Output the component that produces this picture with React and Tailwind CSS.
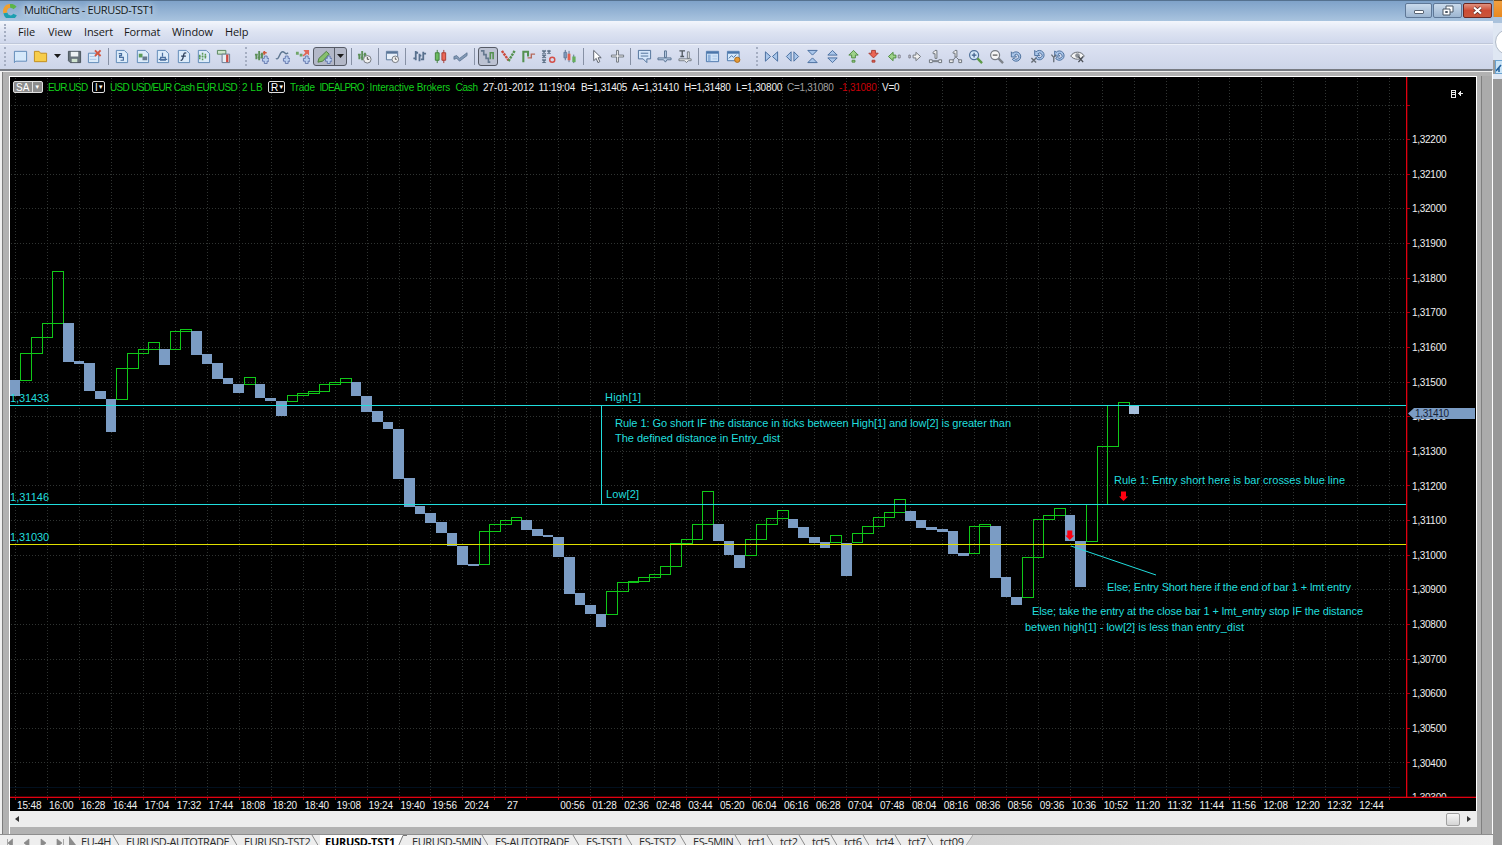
import React from "react";

const UP = "#10c818";
const DOWN = "#7b9cc4";
const CYAN = "#20dede";

// Each bar: [direction, top, bottom]; bars are laid out left to right at a fixed pitch.
const BARS = [
  ["d", 380, 396], ["u", 353, 380], ["u", 337, 353], ["u", 323, 337], ["u", 271, 323],
  ["d", 323, 362], ["d", 361, 364], ["d", 363, 391], ["d", 391, 399], ["d", 399, 432],
  ["u", 368, 399], ["u", 353, 368], ["u", 349, 353], ["u", 342, 349], ["d", 349, 365],
  ["u", 331, 349], ["u", 329, 331], ["d", 331, 355], ["d", 354, 364], ["d", 363, 379],
  ["d", 378, 384], ["d", 384, 393], ["u", 377, 384], ["d", 384, 398], ["d", 398, 401],
  ["d", 401, 416], ["u", 395, 401], ["u", 393, 395], ["u", 391, 393], ["u", 384, 391],
  ["u", 382, 384], ["u", 378, 382], ["d", 382, 396], ["d", 396, 412], ["d", 411, 422],
  ["d", 422, 429], ["d", 429, 479], ["d", 478, 507], ["d", 506, 514], ["d", 513, 523],
  ["d", 522, 533], ["d", 533, 546], ["d", 546, 565], ["d", 564, 566], ["u", 531, 564],
  ["u", 524, 531], ["u", 520, 524], ["u", 517, 520], ["d", 520, 530], ["d", 529, 536],
  ["d", 535, 537], ["d", 537, 557], ["d", 557, 594], ["d", 593, 605], ["d", 605, 614],
  ["d", 614, 627], ["u", 591, 614], ["u", 582, 591], ["u", 581, 582], ["u", 577, 581],
  ["u", 574, 577], ["u", 566, 574], ["u", 543, 566], ["u", 539, 543], ["u", 524, 539],
  ["u", 491, 524], ["d", 524, 541], ["d", 541, 555], ["d", 555, 568], ["u", 539, 555],
  ["u", 524, 539], ["u", 518, 524], ["u", 510, 518], ["d", 519, 528], ["d", 527, 538],
  ["d", 537, 543], ["d", 542, 548], ["u", 535, 542], ["d", 543, 576], ["u", 533, 542],
  ["u", 526, 533], ["u", 517, 526], ["u", 512, 517], ["u", 499, 512], ["d", 511, 521],
  ["d", 520, 528], ["d", 527, 530], ["d", 529, 532], ["d", 531, 554], ["d", 553, 556],
  ["u", 526, 553], ["u", 524, 526], ["d", 526, 578], ["d", 577, 597], ["d", 597, 605],
  ["u", 557, 597], ["u", 519, 557], ["u", 515, 519], ["u", 508, 515], ["d", 515, 541],
  ["d", 541, 587], ["u", 504, 541], ["u", 446, 504], ["u", 405, 446], ["u", 402, 405],
  ["d", 405, 413.5],
];

const TIMES = [
  "15:48", "16:00", "16:28", "16:44", "17:04", "17:32", "17:44", "18:08", "18:20", "18:40", "19:08",
  "19:24", "19:40", "19:56", "20:24", null, null, "00:56", "01:28", "02:36", "02:48", "03:44", "05:20",
  "06:04", "06:16", "06:28", "07:04", "07:48", "08:04", "08:16", "08:36", "08:56", "09:36", "10:36",
  "10:52", "11:20", "11:32", "11:44", "11:56", "12:08", "12:20", "12:32", "12:44", null,
];

const NOTES = [
  ["High[1]", 605, 401, 36],
  ["Low[2]", 606, 498, 33],
  ["Rule 1: Go short IF the distance in ticks between High[1] and low[2] is greater than", 615, 427, 396],
  ["The defined distance in Entry_dist", 615, 442, 165],
  ["Rule 1: Entry short here is bar crosses blue line", 1114, 484, 231],
  ["Else; Entry Short here if the end of bar 1 + lmt entry", 1107, 591, 244],
  ["Else; take the entry at the close bar 1 + lmt_entry stop IF the distance", 1032, 615, 331],
  ["betwen high[1] - low[2] is less than entry_dist", 1025, 631, 219],
  ["1,31433", 10, 402, 39],
  ["1,31146", 10, 501, 39],
  ["1,31030", 10, 541, 39],
];

function Arrow({ x, y }) {
  return <path d={`M${x - 2.5} ${y}h5v5h2l-4.5 4.5l-4.5-4.5h2z`} fill="#ff0010" />;
}

function Chart() {
  const gx = (i) => Math.round(15 + i * 31.96) + 0.5;
  const prices = Array.from({ length: 20 }, (_, i) => i);
  return (
    <svg className="block h-[734px] w-[1466px] bg-black" viewBox="10 77 1466 734" fontFamily="'Liberation Sans', Arial, sans-serif">
      <g stroke="#303432" strokeDasharray="1 2" shapeRendering="crispEdges">
        {TIMES.map((_, i) => <path key={i} d={`M${gx(i)} 78V796`} />)}
        <path d="M505.5 78V796" />
        {Array.from({ length: 20 }, (_, i) => {
          const y = Math.round(104.5 + i * 34.63) + 0.5;
          return <path key={i} d={`M11 ${y}H1410`} />;
        })}
      </g>
      <path d="M10 787.5H1400" stroke="#02101f" />
      <g shapeRendering="crispEdges">
        {BARS.map(([dir, top, bottom], i) => {
          const x = Math.round(9.7 + i * 10.657);
          const w = Math.round(9.7 + (i + 1) * 10.657) - x;
          return dir === "d" ? (
            <rect key={i} x={x} y={top} width={w} height={bottom - top} fill={i === BARS.length - 1 ? "#a6bfdc" : DOWN} />
          ) : (
            <rect key={i} x={x + 0.5} y={top + 0.5} width={w} height={bottom - top} fill="none" stroke={UP} />
          );
        })}
        <rect x="10" y="405" width="1396" height="1" fill={CYAN} />
        <rect x="10" y="504" width="1396" height="1" fill={CYAN} />
        <rect x="601" y="405" width="1" height="99" fill={CYAN} />
        <rect x="10" y="544" width="1396" height="1" fill="#e0e000" />
      </g>
      <path d="M1071 546L1156 575" stroke={CYAN} />
      <Arrow x={1123.5} y={491.5} />
      <Arrow x={1069.8} y={530.5} />
      {NOTES.map(([t, x, y, w]) => (
        <text key={t} x={x} y={y} textLength={w} fontSize="11" fill={CYAN}>{t}</text>
      ))}
      <g fontSize="10" fill="#f0f0f0">
        {prices.map((i) => {
          const y = 139.5 + i * 34.63;
          return (
            <text key={i} x="1412" y={y + 3.7} textLength="34.5">
              {"1,3" + String(2200 - i * 100).padStart(4, "0")}
            </text>
          );
        })}
      </g>
      <rect x="1408" y="798" width="68" height="13" fill="#000" />
      <g fontSize="10" fill="#f0f0f0">
        {TIMES.map((t, i) => t && <text key={i} x={17 + i * 31.96} y="808.5" textLength="24.5">{t}</text>)}
        <text x="507" y="808.5">27</text>
      </g>
      <g stroke="#a00010" shapeRendering="crispEdges">
        {TIMES.map((_, i) => <path key={i} d={`M${gx(i)} 797v3`} />)}
        <path d="M505.5 797v3" />
        {Array.from({ length: 20 }, (_, i) => (
          <path key={i} d={`M1407 ${Math.round(104.5 + i * 34.63) + 0.5}h3`} />
        ))}
      </g>
      <rect x="1406" y="77" width="1.3" height="720" fill="#e00010" />
      <rect x="10" y="796.7" width="1466" height="1.3" fill="#e00010" />
      <path d="M1408 413.5L1414 408H1475V419H1414Z" fill={DOWN} />
      <text x="1415" y="417.3" fontSize="10" textLength="34" fill="#142036">1,31410</text>
      <g stroke="#e8e8e8" fill="none" shapeRendering="crispEdges">
        <path d="M1451.5 90.5h4v7h-4zM1451 92.5h4M1451 94.5h4M1458 93.5h5M1459.5 92v3M1460.5 91v5" />
      </g>
    </svg>
  );
}

const G = "text-[#12cf1c]";
const W = "text-[#f0f0f0]";
const LEGEND = [
  ["USD USD/EUR Cash EUR.USD", "w-[132px] tracking-[-0.66px]", G],
  ["2 LB", "w-[26px]", G],
  "R",
  ["Trade", "w-[29.5px] tracking-[-0.2px]", G],
  ["IDEALPRO", "w-[50px] tracking-[-0.8px]", G],
  ["Interactive Brokers", "w-[86px] tracking-[-0.14px]", G],
  ["Cash", "w-[27.5px] tracking-[-0.3px]", G],
  ["27-01-2012", "w-[55.5px]", W],
  ["11:19:04", "w-[42.5px] tracking-[-0.2px]", W],
  ["B=1,31405", "w-[51px] tracking-[-0.3px]", W],
  ["A=1,31410", "w-[52px] tracking-[-0.2px]", W],
  ["H=1,31480", "w-[52px] tracking-[-0.3px]", W],
  ["L=1,30800", "w-[51px] tracking-[-0.15px]", W],
  ["C=1,31080", "w-[52px] tracking-[-0.3px]", "text-[#a0a0a0]"],
  ["-1,31080", "w-[43px] tracking-[-0.25px]", "text-[#c80008]"],
  ["V=0", "w-[20px] tracking-[-0.2px]", W],
];

function Legend() {
  return (
    <div className="absolute left-[3px] top-[3.5px] flex h-[13px] items-center whitespace-pre font-['Liberation_Sans',Arial,sans-serif] text-[10px] leading-[13px]">
      <span className="flex h-[12px] w-[30px] items-center rounded-[2px] border border-[#e0e0e0] bg-[#8c8c8c] pl-[2px] text-white">
        SA
        <span className="ml-[3px] flex h-[10px] w-[9px] items-center justify-center border-l border-[#e0e0e0] text-[6px]">▼</span>
      </span>
      <span className={`ml-[5px] w-[44px] tracking-[-0.8px] ${G}`}>EUR.USD</span>
      <span className="mr-[5px] flex h-[12px] w-[13px] items-center rounded-[2px] border border-[#e0e0e0] pl-[2px] text-white">
        I<span className="text-[6px]">▼</span>
      </span>
      {LEGEND.map((it) =>
        it === "R" ? (
          <span key="R" className="mr-[5px] flex h-[12px] w-[17px] items-center rounded-[2px] border border-[#e0e0e0] pl-[2px] text-white">
            R<span className="text-[6px]">▼</span>
          </span>
        ) : (
          <span key={it[0]} className={`shrink-0 ${it[1]} ${it[2]}`}>{it[0]}</span>
        )
      )}
    </div>
  );
}

const S = "#5c7590";
const plus = <path d="M11 7.500h3v2.500h2v3h-2v2.500h-3V13H9v-3h2z" fill="#bcd0f0" stroke="#5a6fa8" strokeWidth=".9" />;
const page = <path d="M2.500 1.500h8.500l3.500 3.500v9.500h-12z" fill="#dcebfa" stroke="#5d87b5" />;
const tree = <path d="M2.500 5v6M5.500 2v10M8.500 4v6M1 6h3M4 9h3M7 6h3" stroke="#5c8f58" strokeWidth="2" />;
const rot = <path d="M4 4.500A5 5 0 1 1 3.500 11L5.500 9.500A2.600 2.600 0 1 0 6 6.500L8 8.500H2.500V3z" fill="#aac6ea" stroke="#4a6d9a" strokeWidth="1" />;
const hand = <path d="M1.500 11.500h3v1h7v-1h3v3h-3v-1h-7v1h-3z" fill="#eef2f8" stroke="#6a7078" />;

const I = {
  new: <path d="M1.500 2.500h13v10.500h-11.500l-1.500 1.500z" fill="#d6e9fb" stroke="#5d87b5" />,
  open: <path d="M1.500 13.500v-11h5l1.500 2h6.500v9z" fill="#f7cd4a" stroke="#c08c1c" />,
  save: <g><path d="M1.500 2.500h13v12h-11l-2-2z" fill="#68737c" stroke="#47525a" /><path d="M4 3h8v5H4z" fill="#eef3f6" /><path d="M5 10.500h6v3.500H5z" fill="#cfe3cf" /></g>,
  del: <g><path d="M1.500 4.500h11v10h-11z" fill="#dcebfa" stroke="#5d87b5" /><path d="M3 8h6M3 11h7" stroke="#a9c4e4" /><path d="M8.500 1.500l6 6M14.500 1.500l-6 6" stroke="#d2553f" strokeWidth="2" /></g>,
  p1: <g>{page}<path d="M5 5h3v2H6v2h4v3H7" fill="none" stroke="#4a6f9f" strokeWidth="1.300" /></g>,
  p2: <g>{page}<path d="M4 5h4v4H4z" fill="#5b9a58" /><path d="M8 8h5v4H8z" fill="#66798f" /></g>,
  p3: <g>{page}<path d="M4 11h9M6 9h5v3H6zM8 4v4" fill="none" stroke="#4a6f9f" strokeWidth="1.300" /></g>,
  p4: <g>{page}<path d="M11 4.500c-2-1-2.500 0-3 2.500s-1 5.500-3 5M5.500 7.500h5" fill="none" stroke="#2c405c" strokeWidth="1.400" /></g>,
  p5: <g>{page}<path d="M4 6v6M7 4v8M10 5v6M3 8h9" stroke="#5b9a58" strokeWidth="1.600" strokeDasharray="2 1" /></g>,
  p6: <g><path d="M1.500 1.500h9v4h-9z" fill="#cfe5cc" stroke="#55825a" /><path d="M6.500 5.500h8v9h-8z" fill="#e9eef4" stroke="#66798f" /><path d="M12 6v8" stroke="#cc4a42" strokeWidth="2.500" /></g>,
  add1: <g>{tree}<path d="M11 2v4M9.500 4h4" stroke="#cc5a3a" strokeWidth="1.800" />{plus}</g>,
  add2: <g><path d="M1 10c3 3 4-7 7-7s3 4 6 1" fill="none" stroke={S} strokeWidth="1.500" />{plus}</g>,
  add3: <g><path d="M1 3h3v3H1zM5 5h3v3H5z" fill="#6fa567" /><path d="M9 1h6v6l-2-2-4 3-1-1 3-3z" fill="#e0685a" />{plus}</g>,
  pen: <g><path d="M2 10l8-7.500 3 3-7 7.500-5 1z" fill="#86c06e" stroke="#4c7a40" />{plus}</g>,
  clock: <g>{tree}<circle cx="11" cy="11" r="4" fill="#f0f0f0" stroke="#70757c" /><path d="M11 8.500V11h2" stroke="#444" fill="none" /></g>,
  winclock: <g><path d="M1.500 2.500h12v9h-12z" fill="#e8f0fa" stroke="#587497" /><path d="M2 4h11" stroke="#587497" strokeWidth="2" /><circle cx="11" cy="11" r="3.500" fill="#f3f3f3" stroke="#70757c" /><path d="M11 9v2h1.500" stroke="#555" fill="none" /></g>,
  bars: <path d="M4 2v10M1.500 10H4M4 4h2.500M8 5v8M8 7h2M12 3v9M12 5h3M9.500 11H12" stroke="#58708e" strokeWidth="1.900" />,
  candle: <g><path d="M4.500 1v14" stroke="#3e7f3a" /><path d="M2.500 4h4v8h-4z" fill="#6cbb60" stroke="#3e7f3a" /><path d="M11.500 1v14" stroke="#a83a30" /><path d="M9.500 4h4v8h-4z" fill="#ec6656" stroke="#a83a30" /></g>,
  line: <path d="M1 8l3-1 3 3 8-6v3l-8 6-3-3-3 1z" fill="#8299b5" stroke="#566f8d" strokeWidth=".8" />,
  tlb: <g fill="none" strokeWidth="1.700"><path d="M1 2h3v4h2.500v4H9v4h2" stroke="#66798f" /><path d="M11 11V4h3v7" stroke="#559150" /></g>,
  renko: <g fill="none" strokeWidth="2.600" strokeDasharray="2.600 .8"><path d="M1 2l7 10" stroke="#cc4a3c" /><path d="M8 13l6.500-11" stroke="#559150" /></g>,
  kagi: <g fill="none"><path d="M2.500 14V3h5v5" stroke="#559150" strokeWidth="2.200" /><path d="M7 9.500h4V5.500h4" stroke="#b56a5c" strokeWidth="1.500" /></g>,
  pf: <g fill="none" strokeWidth="1.800"><path d="M1.500 1.500l3.500 3.500M5 1.500L1.500 5M7 1.500l3 3.500M10 1.500L7 5M1.500 6l3.500 3.500M5 6L1.500 9.500M1.500 11L5 14.500M5 11l-3.500 3.500" stroke="#5f7288" /><circle cx="12" cy="11.500" r="2.700" stroke="#d44f48" strokeWidth="1.500" /></g>,
  hk: <g><path d="M3.500 1v11M7.500 2v12M12.500 6v9" stroke="#57708e" /><path d="M2 3.500h3v6H2z" fill="#7e97b8" stroke="#57708e" strokeWidth=".7" /><path d="M6 5h3v7H6z" fill="#e2604f" /><path d="M11 8h3.500v6H11z" fill="#65ad5c" /></g>,
  cursor: <path d="M5 1.500v11l2.700-2.500 1.800 4.500 2-1-1.800-4.200h3.300z" fill="#fff" stroke="#555c66" />,
  cross: <path d="M7 1.500h2v5h5.500v2H9v5.500H7V8.500H1.500v-2H7z" fill="#f3f3f3" stroke="#6c737c" />,
  note: <g><path d="M1.500 1.500h13v9h-4v4l-4-4h-5z" fill="#d4e6fa" stroke="#4f7098" /><path d="M4 4.500h8M4 7.500h8" stroke="#4f7098" /></g>,
  hline: <path d="M1 9.500h14v2H10.500L9 14l-2-2.500H1zM8 2h2v7H8z" fill="#bdd0e8" stroke="#56708f" strokeWidth="1" />,
  tline: <g><path d="M1.500 2h6M4.500 2v6M2.500 8h4" stroke="#50585f" strokeWidth="1.400" /><path d="M1 10.500h13v2h-3l-2 2-2-2H1zM10 3h2v7h-2z" fill="#eee" stroke="#666e77" strokeWidth=".9" /></g>,
  list: <g><path d="M1.500 2.500h13v11h-13z" fill="#cfe3f8" stroke="#4a75aa" /><path d="M2 4h12" stroke="#4a75aa" strokeWidth="2" /><path d="M3 6h3v7H3z" fill="#8fb2dc" /><path d="M8 7.500h5M8 10.500h5" stroke="#a9c4e4" /></g>,
  shot: <g><path d="M1.500 2.500h12.500v10h-12.500z" fill="#d6e9fb" stroke="#4a75aa" /><path d="M2 4h12" stroke="#4a75aa" strokeWidth="2" /><path d="M3 10l3-3 2 2 3-3" stroke="#4a6f9f" fill="none" /><circle cx="12" cy="11.500" r="2.800" fill="#e59a35" stroke="#a96a1c" /></g>,
  inH: <path d="M1.500 3v10l5.500-5zM14.500 3v10L9 8z" fill="#aac6ea" stroke="#456c9d" />,
  outH: <path d="M6.500 3v10L1.500 8zM9.500 3v10l5-5z" fill="#aac6ea" stroke="#456c9d" />,
  inV: <path d="M3 1.500h10L8 6.500zM3 14.500h10L8 9.500z" fill="#aac6ea" stroke="#456c9d" />,
  outV: <path d="M3 6.500h10L8 1.500zM3 9.500h10L8 14.500z" fill="#aac6ea" stroke="#456c9d" />,
  up: <g fill="#9ed28a" stroke="#4d8a3d"><path d="M8 1.500l5 5h-3v3H6v-3H3z" /><path d="M6.500 12h3v2h-3z" /></g>,
  down: <g fill="#ec6656" stroke="#a83a30"><path d="M6 1.500h4v3h3l-5 5-5-5h3z" /><path d="M6.500 12h3v2h-3z" /></g>,
  left: <g><path d="M1.500 8l5-4.500v3h3v3h-3v3z" fill="#9ed28a" stroke="#4d8a3d" /><path d="M12 6.500h2v3h-2z" fill="#eee" stroke="#778" /></g>,
  right: <g><path d="M14.500 8l-5-4.500v3h-3v3h3v3z" fill="#f0f0f0" stroke="#70757c" /><path d="M2 6.500h1.500v3H2z" fill="#eee" stroke="#778" /></g>,
  fit1: <g>{hand}<path d="M5.500 3.500l2-2h2v8.500h-2v-5h-2z" fill="#eee" stroke="#6a7078" /></g>,
  fit2: <g><path d="M5.500 3.500l2-2h2v7h-2v-4h-2z" fill="#eee" stroke="#6a7078" /><path d="M8 8.500l-3 4M9 9l4 4" stroke="#6a7078" /><path d="M1.500 11.500h4v3h-4zM11.500 11.500h3v3h-3z" fill="#eee" stroke="#6a7078" /></g>,
  zin: <g><circle cx="6.500" cy="6.500" r="4.800" fill="#d5e8fb" stroke="#4f7098" strokeWidth="1.300" /><path d="M6.500 4v5M4 6.500h5" stroke="#3f5f8a" strokeWidth="1.300" /><path d="M10 10l5 5" stroke="#5d9a48" strokeWidth="2.500" /></g>,
  zout: <g><circle cx="6.500" cy="6.500" r="4.800" fill="#f6f6f6" stroke="#777d85" strokeWidth="1.300" /><path d="M4 6.500h5" stroke="#555" strokeWidth="1.300" /><path d="M10 10l5 5" stroke="#7d838b" strokeWidth="2.500" /></g>,
  r1: rot,
  r2: <g><g transform="translate(2.500 -1.500)">{rot}</g><path d="M1.500 9.500l5 5M6.500 9.500l-5 5" stroke="#666d76" strokeWidth="1.500" /></g>,
  r3: <g><g transform="translate(2.500 -1)">{rot}</g><path d="M1.500 6l2.500 3v5M6.500 6L4 9" stroke="#666d76" fill="none" strokeWidth="1.400" /></g>,
  eye: <g><path d="M.8 7.500C4 2 12 2 15.200 7.500 12 12 4 12 .8 7.500z" fill="#f4f4f4" stroke="#5f646b" /><circle cx="8" cy="7" r="2.500" fill="#8b9097" /><path d="M9 8l5 6M14 8l-5 6" stroke="#4c5158" strokeWidth="1.400" /></g>,
};

const TOOLS = [
  "new", "open", "v", "save", "del", "|", "p1", "p2", "p3", "p4", "p5", "p6", "grip",
  "add1", "add2", "add3", "PEN", "|", "clock", "|", "winclock", "|", "bars", "candle", "line", "|",
  "TLB", "renko", "kagi", "pf", "hk", "|", "cursor", "cross", "|", "note", "hline", "tline", "|", "list", "shot", "grip2",
  "inH", "outH", "inV", "outV", "up", "down", "left", "right", "fit1", "fit2", "zin", "zout", "r1", "r2", "r3", "eye",
];

function Glyph({ n }) {
  return <svg className="block h-[15px] w-[15px]" viewBox="0 0 16 16" fill="none">{I[n]}</svg>;
}

const Caret = () => <svg className="h-[4px] w-[7px]" viewBox="0 0 7 4"><path d="M0 0h7L3.500 4z" fill="#1a1a1a" /></svg>;

function Tool({ n }) {
  if (n === "|") return <span className="flex w-[6.900px] shrink-0 justify-center"><i className="h-[17px] w-px bg-[#8791a5]" /></span>;
  if (n === "v") return <span className="flex w-[13px] shrink-0 justify-center"><Caret /></span>;
  if (n === "grip" || n === "grip2")
    return (
      <span className={`flex h-full shrink-0 items-center justify-end ${n === "grip" ? "w-[17.500px] pr-[5px]" : "w-[18.200px] pr-[3px]"}`}>
        <i className="h-[19px] border-l-2 border-dotted border-[#a5aec2]" />
      </span>
    );
  if (n === "PEN")
    return (
      <span className="mx-[.5px] flex h-[19px] w-[34px] shrink-0 items-center rounded-[3px] border border-[#565b66] bg-[#b3b8c8]">
        <span className="flex w-[20px] justify-center"><Glyph n="pen" /></span>
        <span className="flex h-full flex-1 items-center justify-center border-l border-[#565b66]"><Caret /></span>
      </span>
    );
  if (n === "TLB")
    return (
      <span className="flex h-[19px] w-[20.400px] shrink-0 items-center justify-center rounded-[3px] border border-[#565b66] bg-[#bcc2d2]">
        <Glyph n="tlb" />
      </span>
    );
  return <span className="flex w-[20.430px] shrink-0 justify-center"><Glyph n={n} /></span>;
}

function WindowButtons() {
  const base = "flex h-[15px] items-center justify-center rounded-[2px] border";
  return (
    <div className="mt-[2px] flex gap-[1px]">
      <span className={`${base} w-[27px] border-[#5f7897] bg-gradient-to-b from-[#c9daec] to-[#9db6d1]`}>
        <i className="mt-[3px] h-[4px] w-[10px] rounded-[1px] border border-[#596574] bg-white" />
      </span>
      <span className={`${base} w-[29px] border-[#5f7897] bg-gradient-to-b from-[#c9daec] to-[#9db6d1]`}>
        <svg className="h-[11px] w-[12px]" viewBox="0 0 12 11"><path d="M4 1h7v6H4z" fill="#fff" stroke="#4a5665" /><path d="M1 4h7v6H1z" fill="#fff" stroke="#4a5665" /><path d="M3.500 6.500h2v1h-2z" stroke="#4a5665" fill="none" /></svg>
      </span>
      <span className={`${base} w-[29px] border-[#6b2620] bg-gradient-to-b from-[#e0917f] via-[#cc4b34] to-[#c9563a]`}>
        <svg className="h-[9px] w-[11px]" viewBox="0 0 11 9"><path d="M2 1.500l7 6M9 1.500l-7 6" stroke="#5a2a28" strokeWidth="3.600" /><path d="M2 1.500l7 6M9 1.500l-7 6" stroke="#fff" strokeWidth="2.200" /></svg>
      </span>
    </div>
  );
}

const MENU = [["File", "w-[30px]"], ["View", "w-[36px]"], ["Insert", "w-[40px]"], ["Format", "w-[48px]"], ["Window", "w-[53px]"], ["Help", "w-[30px]"]];

const TABS = [
  ["EU-4H", "w-[45px]"], ["EURUSD-AUTOTRADE", "w-[118px]"], ["EURUSD-TST2", "w-[81px]"], ["EURUSD-TST1", "w-[87px]"],
  ["EURUSD-5MIN", "w-[83px]"], ["ES-AUTOTRADE", "w-[91px]"], ["ES-TST1", "w-[53px]"], ["ES-TST2", "w-[54px]"], ["ES-5MIN", "w-[55px]"],
  ["tct1", "w-[32px]"], ["tct2", "w-[32px]"], ["tct5", "w-[32px]"], ["tct6", "w-[32px]"], ["tct4", "w-[32px]"], ["tct7", "w-[32px]"], ["tct09", "w-[38px]"],
];

function SheetTabs() {
  return (
    <div className="flex h-[11px] overflow-hidden border-t border-[#8e8e8e] bg-[#dcdcdc] font-['Open_Sans','Noto_Sans',sans-serif] text-[11px] text-[#2a2a2a]">
      <svg className="h-[10px] w-[76px] shrink-0 bg-[#eeeeee]" viewBox="0 0 76 10">
        <path d="M7.500 4v8M12.500 4v8L8 8zM29 4v8l-5-4zM41 4v8l5-4zM57 4v8l5-4zM63.500 4v8" fill="#8a8a8a" stroke="#8a8a8a" strokeWidth=".7" />
        <path d="M69 1l7 9h-7z" fill="#8d8d8d" />
      </svg>
      {TABS.map(([t, w]) => {
        const active = t === "EURUSD-TST1";
        return (
          <span key={t} className={`flex h-[14px] shrink-0 whitespace-nowrap leading-[14px] ${w} ${active ? "bg-white font-bold text-black" : "bg-[#ededed]"}`}>
            <span className={`w-0 flex-1 pl-[5px] ${active ? "tracking-[-0.25px]" : "tracking-[-0.42px]"}`}>{t}</span>
            <svg className="h-[12px] w-[9px] shrink-0" viewBox="0 0 9 12">
              {active ? (
                <g><path d="M9 0H5L0 12h9z" fill="#ededed" /><path d="M9 .5H5L0 12" fill="none" stroke="#777" /></g>
              ) : t === "tct09" ? (
                <g><path d="M9 0L1 12h8z" fill="#d4d4d4" /><path d="M9 0L1 12" stroke="#a8a8a8" /></g>
              ) : (
                <path d="M1 0l7 12" stroke="#8b8b8b" />
              )}
            </svg>
          </span>
        );
      })}
      <span className="flex-1 bg-gradient-to-r from-[#d4d4d4] to-[#f0f0f0]" />
    </div>
  );
}

export default function App() {
  return (
    <div className="flex h-[845px] w-[1502px] overflow-hidden bg-[#9a9a9a]">
      <main className="flex w-[1493px] shrink-0 flex-col bg-[#d5dcee] font-['Open_Sans','Noto_Sans',sans-serif]">
        <header className="flex h-[21px] shrink-0 items-start justify-between border-t border-[#55718f] bg-gradient-to-b from-[#7fa2c9] to-[#a9c4df] pr-[1px]">
          <div className="flex h-[19px] items-center pl-[3px]">
            <svg className="h-[14px] w-[14px]" viewBox="0 0 14 14" fill="none" strokeWidth="4">
              <path d="M12 4A5 5 0 0 0 7 2" stroke="#5cb548" />
              <path d="M7 2A5 5 0 0 0 2.500 9" stroke="#f0a030" />
              <path d="M2.500 9A5 5 0 0 0 12 10.500" stroke="#1c9fb0" />
            </svg>
            <h1 className="ml-[7px] text-[11px] tracking-[-0.38px] text-[#101820] [text-shadow:0_0_6px_#fff,0_0_8px_#dbe9f7]">MultiCharts - EURUSD-TST1</h1>
          </div>
          <WindowButtons />
        </header>
        <nav className="flex h-[23px] shrink-0 items-center border-b border-[#c0c8da] bg-gradient-to-b from-[#f3f6fc] via-[#dde3f2] to-[#d0d8ec] text-[11px] tracking-[-0.1px] text-[#181818]">
          <i className="ml-[4px] h-[17px] border-l-2 border-dotted border-[#a5aec2]" />
          <div className="ml-[12px] flex">
            {MENU.map(([m, w]) => <span key={m} className={w}>{m}</span>)}
          </div>
        </nav>
        <div className="flex h-[25px] shrink-0 items-center border-t border-[#edf1f9] bg-gradient-to-b from-[#dce2f2] to-[#cdd5e9] pb-[2px]">
          <i className="ml-[4px] h-[19px] border-l-2 border-dotted border-[#a5aec2]" />
          <div className="ml-[4px] flex h-full items-center">
            {TOOLS.map((n, i) => <Tool key={i} n={n} />)}
          </div>
        </div>
        <section className="flex h-[765px] shrink-0 border-t-2 border-r border-[#777b82] border-r-white bg-[#f0f0f0] pl-[2px] pt-[1px]">
          <div className="flex flex-1 border-l border-[#7d7d7d] bg-[#b2b2b2] pl-[6px] pt-[4px]">
            <div className="flex w-[1468px] flex-col border-l border-t border-white">
              <div className="relative h-[734px] w-[1467px] border-r border-white">
                <Chart />
                <Legend />
              </div>
              <div className="flex h-[16px] w-[1467px] items-center justify-between bg-[#ededed]">
                <svg className="ml-[5px] h-[6px] w-[4px]" viewBox="0 0 4 6"><path d="M4 0L0 3l4 3z" fill="#333" /></svg>
                <span className="flex items-center gap-[7px] pr-[6px]">
                  <i className="h-[13px] w-[14px] rounded-[2px] border border-[#a0a0a0] bg-gradient-to-b from-[#f8f8f8] to-[#d4d4d4]" />
                  <svg className="h-[6px] w-[4px]" viewBox="0 0 4 6"><path d="M0 0l4 3-4 3z" fill="#333" /></svg>
                </span>
              </div>
            </div>
            <div className="flex-1 pl-[4px]">
              <div className="h-full border-l border-[#808080] bg-[#ababab]" />
            </div>
          </div>
        </section>
        <SheetTabs />
      </main>
      <aside className="flex flex-1 flex-col">
        <div className="ml-[1px] h-[17px] border-t border-[#7a4a10] bg-gradient-to-b from-[#f0a040] to-[#e8881c]" />
        <div className="h-[6px] bg-[#aac2dc]" />
        <div className="flex h-[37px] items-center overflow-hidden bg-[#dfe7f3]">
          <i className="ml-[2px] h-[26px] w-[26px] shrink-0 rounded-full border border-[#b0bac8] bg-white" />
        </div>
        <div className="ml-[2px] flex h-[14px] items-center border border-[#6aa2d0] bg-[#c9e4f7]">
          <svg className="h-[9px] w-[6px]" viewBox="0 0 6 9"><path d="M0 8l5-6M3 4v5" stroke="#1f5f9c" strokeWidth="1.500" /></svg>
        </div>
        <div className="h-[5px] bg-[#dfe7f3]" />
        <div className="flex-1 bg-[#989898]" />
      </aside>
    </div>
  );
}
